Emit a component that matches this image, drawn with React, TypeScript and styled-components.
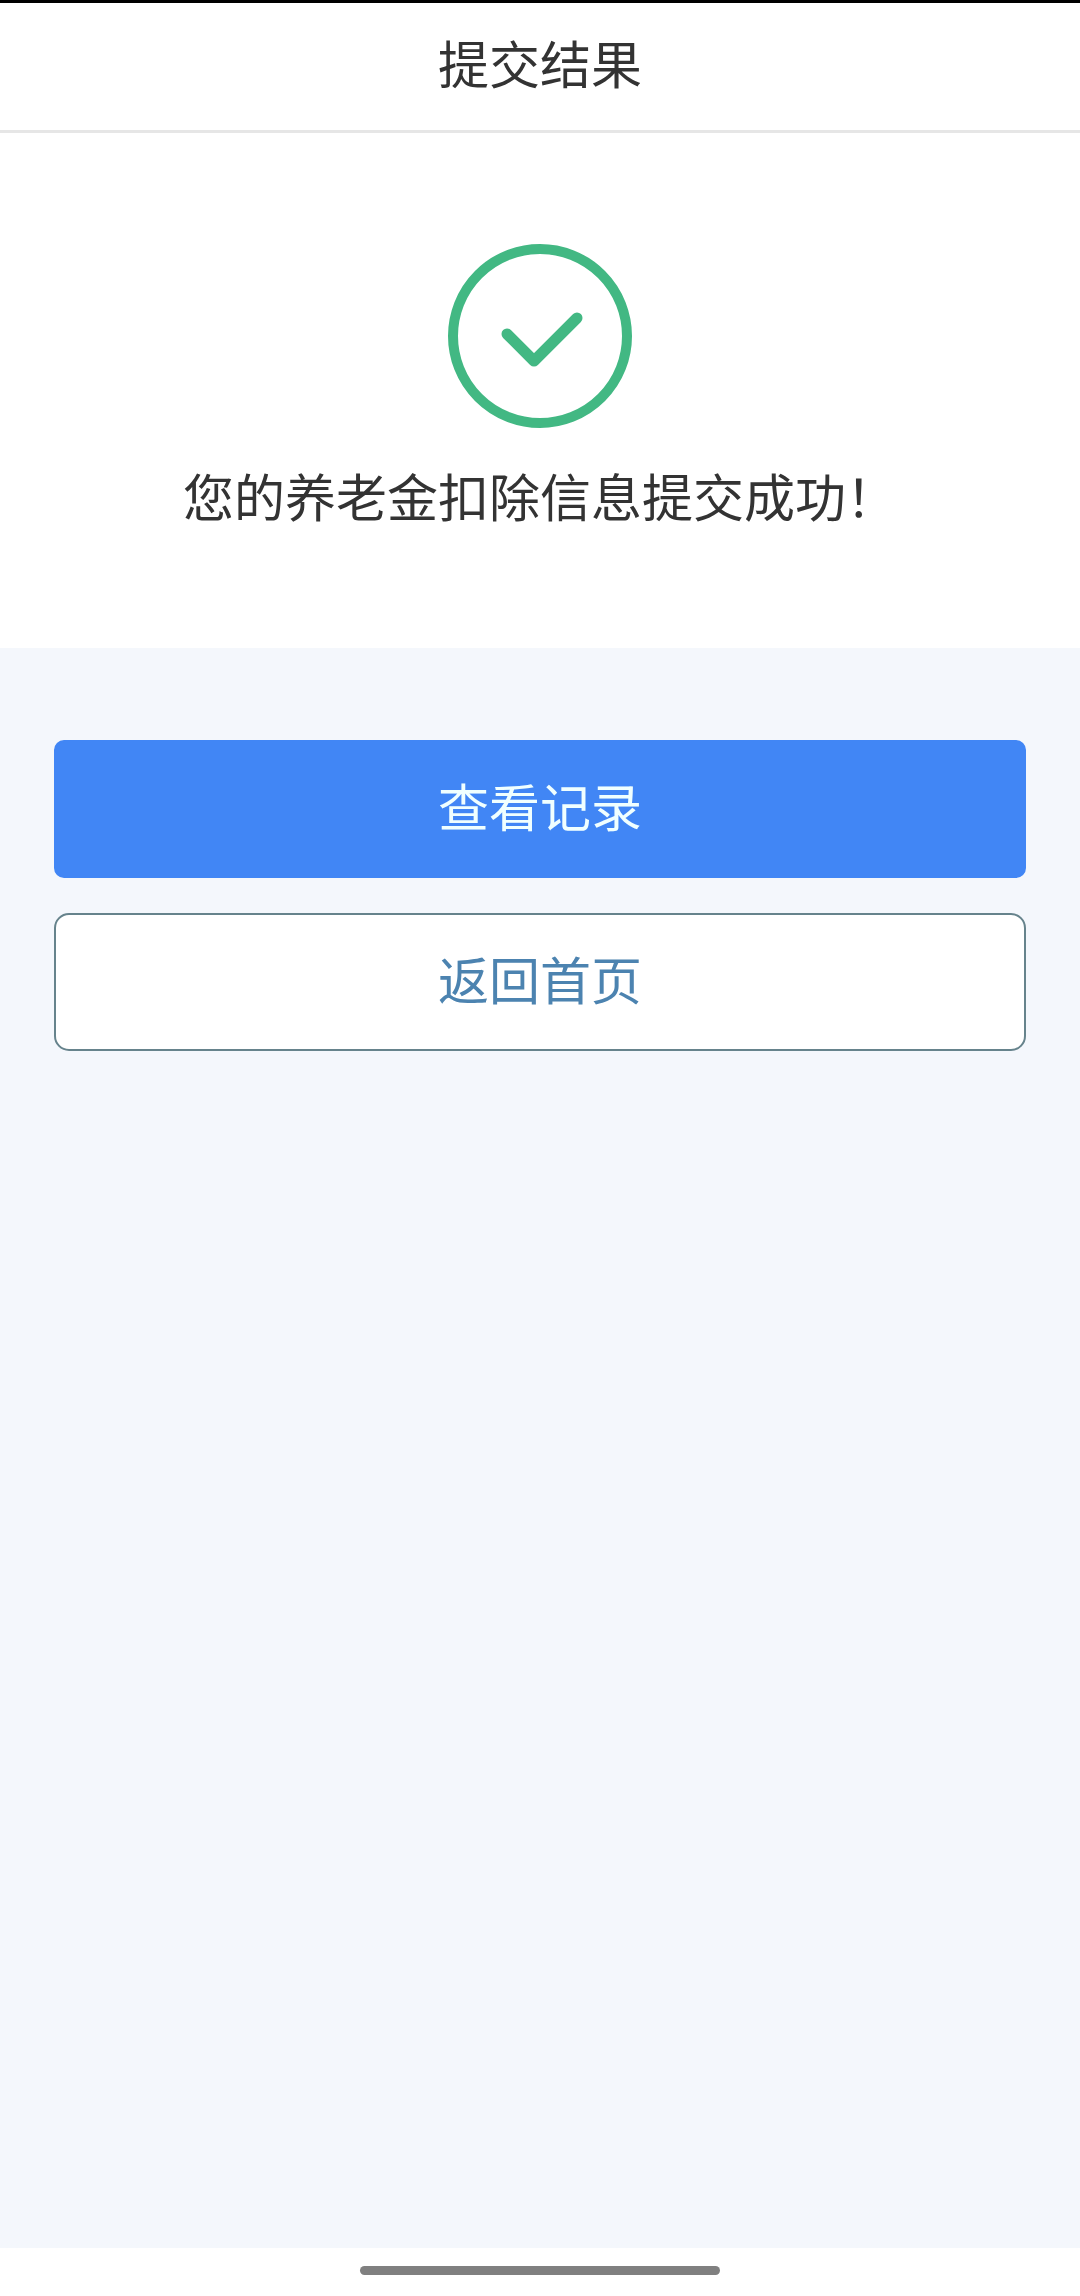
import React from 'react';
import styled, { createGlobalStyle } from 'styled-components';

const GlobalStyle = createGlobalStyle`
  * {
    box-sizing: border-box;
  }
  body {
    margin: 0;
    background: #f4f7fc;
    font-family: 'Noto Sans CJK SC', sans-serif;
    color: #333333;
  }
`;

const Page = styled.div`
  display: flex;
  flex-direction: column;
  min-height: 100vh;
  border-top: 3px solid #000000;
`;

const Header = styled.header`
  display: flex;
  justify-content: center;
  padding: 23px 24px 32px;
  background: #ffffff;
  border-bottom: 3px solid #e6e6e6;
`;

const Title = styled.h1`
  margin: 0;
  font-size: 51px;
  font-weight: 400;
  line-height: 72px;
`;

const Result = styled.section`
  display: flex;
  flex-direction: column;
  align-items: center;
  gap: 31px;
  padding: 111px 24px 117px;
  background: #ffffff;
`;

const StatusIcon = styled.svg`
  width: 184px;
  height: 184px;
  fill: none;
  stroke: #42b883;
`;

const Message = styled.p`
  margin: 0;
  font-size: 51px;
  line-height: 72px;
  text-align: center;
`;

const Actions = styled.main`
  flex: 1;
  display: flex;
  flex-direction: column;
  gap: 35px;
  padding: 92px 5%;
`;

const ActionButton = styled.button<{ $primary?: boolean }>`
  width: 100%;
  padding: 27px 24px 35px;
  border: 2px solid ${({ $primary }) => ($primary ? '#4186f5' : '#66838c')};
  border-radius: ${({ $primary }) => ($primary ? '10px' : '15px')};
  background: ${({ $primary }) => ($primary ? '#4186f5' : '#ffffff')};
  color: ${({ $primary }) => ($primary ? '#f0ffff' : '#4c83b0')};
  font-family: inherit;
  font-size: 51px;
  line-height: 72px;
  cursor: pointer;
`;

const NavigationBar = styled.footer`
  display: flex;
  justify-content: center;
  padding: 18px 0 21px;
  background: #ffffff;
`;

const HomeIndicator = styled.div`
  width: 33.333%;
  height: 9px;
  border-radius: 5px;
  background: #808080;
`;

export default function App() {
  return (
    <Page>
      <GlobalStyle />
      <Header>
        <Title>提交结果</Title>
      </Header>
      <Result>
        <StatusIcon viewBox="0 0 184 184" aria-hidden="true">
          <circle cx="92" cy="92" r="87" strokeWidth="10" />
          <path
            d="M59 90 86 117 129 74"
            strokeWidth="11"
            strokeLinecap="round"
            strokeLinejoin="round"
          />
        </StatusIcon>
        <Message>您的养老金扣除信息提交成功！</Message>
      </Result>
      <Actions>
        <ActionButton type="button" $primary>
          查看记录
        </ActionButton>
        <ActionButton type="button">返回首页</ActionButton>
      </Actions>
      <NavigationBar>
        <HomeIndicator />
      </NavigationBar>
    </Page>
  );
}
